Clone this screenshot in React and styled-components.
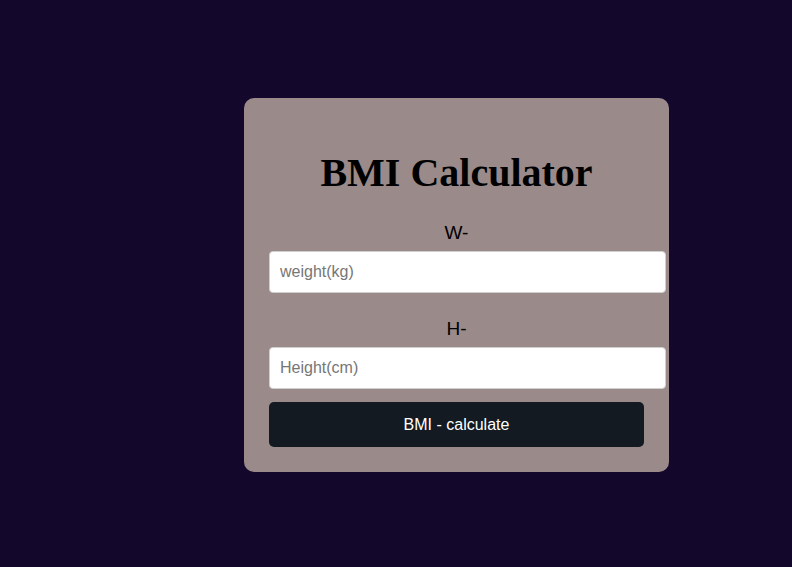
import React from 'react';
import styled, { createGlobalStyle } from 'styled-components';

const GlobalStyle = createGlobalStyle`
  body {
    margin: 0;
    background-color: #13082c;
    font-family: "Liberation Sans", Arial, sans-serif;
  }
`;

const Page = styled.div`
  min-height: 567px;
  padding: 98px 0 0 244px;
  box-sizing: border-box;
`;

const Card = styled.div`
  width: 375px;
  padding: 25px;
  background-color: #9a8a8a;
  border-radius: 10px;
`;

const Title = styled.h1`
  margin: 26px 0 26px;
  text-align: center;
  font-family: "Liberation Serif", "Times New Roman", serif;
  font-size: 40px;
  font-weight: bold;
  color: #000;
`;

const Label = styled.label`
  display: block;
  margin: ${props => (props.first ? '0' : '25px')} 0 7px;
  text-align: center;
  font-size: 19px;
  color: #000;
`;

const Input = styled.input`
  display: block;
  width: 100%;
  height: 18px;
  line-height: 18px;
  padding: 11px 10px;
  margin: 0;
  font-family: "Liberation Sans", Arial, sans-serif;
  font-size: 16px;
  border: 1px solid #cfcfcf;
  border-radius: 4px;
  background: #fff;
  outline: none;

  &::placeholder {
    color: #767676;
  }
`;

const Button = styled.button`
  display: block;
  width: 100%;
  margin-top: 13px;
  padding: 14px 0;
  font-family: "Liberation Sans", Arial, sans-serif;
  font-size: 16px;
  line-height: 17px;
  color: #fff;
  background-color: #131a22;
  border: none;
  border-radius: 5px;
  cursor: pointer;
`;

const App = () => {
  return (
    <>
      <GlobalStyle />
      <Page>
        <Card>
          <Title>BMI Calculator</Title>
          <Label first>W-</Label>
          <Input type="text" placeholder="weight(kg)" />
          <Label>H-</Label>
          <Input type="text" placeholder="Height(cm)" />
          <Button>BMI - calculate</Button>
        </Card>
      </Page>
    </>
  );
};

export default App;
